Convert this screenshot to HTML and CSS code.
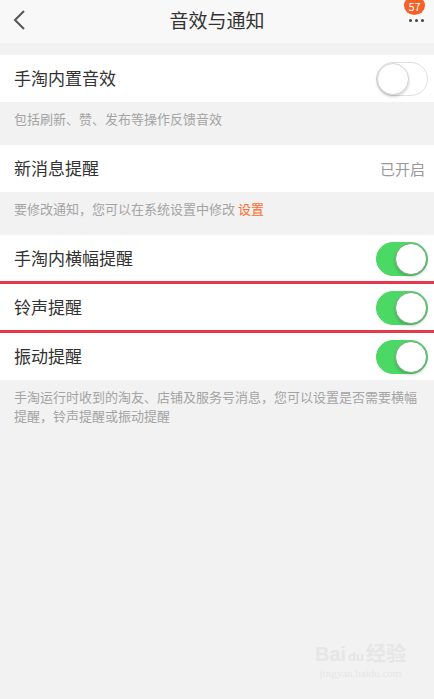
FILE: index.html
```html
<!DOCTYPE html>
<html lang="zh-CN">

<head>
  <meta charset="UTF-8" />
  <meta name="viewport" content="width=device-width, initial-scale=1" />
  <title>音效与通知</title>
  <link rel="stylesheet" href="styles.css">
</head>

<body>

  <header class="topbar">
    <svg class="back" width="14" height="22" viewBox="0 0 14 22">
      <path d="M12 2 L3 11 L12 20" fill="none" stroke="#555" stroke-width="2" />
    </svg>
    <div class="title">音效与通知</div>
    <div class="more">
      <span class="badge">57</span>
      <span class="dots"><i></i><i></i><i></i></span>
    </div>
  </header>

  <div class="group">
    <div class="row">
      <span>手淘内置音效</span>
      <span class="switch"></span>
    </div>
  </div>
  <div class="desc">包括刷新、赞、发布等操作反馈音效</div>

  <div class="group">
    <div class="row">
      <span>新消息提醒</span>
      <span class="value">已开启</span>
    </div>
  </div>
  <div class="desc">要修改通知，您可以在系统设置中修改 <span class="link">设置</span></div>

  <div class="group">
    <div class="row">
      <span>手淘内横幅提醒</span>
      <span class="switch on"></span>
    </div>
    <div class="mark"></div>
    <div class="row">
      <span>铃声提醒</span>
      <span class="switch on"></span>
    </div>
    <div class="mark"></div>
    <div class="row">
      <span>振动提醒</span>
      <span class="switch on"></span>
    </div>
  </div>
  <div class="desc">手淘运行时收到的淘友、店铺及服务号消息，您可以设置是否需要横幅提醒，铃声提醒或振动提醒</div>

  <div class="watermark">
    <div class="wm-logo">Bai<span class="paw">du</span>经验</div>
    <div class="wm-url">jingyan.baidu.com</div>
  </div>

</body>

</html>
```

FILE: styles.css
```css
html,
body {
  margin: 0;
  padding: 0;
  width: 100%;
  height: 100%;
}

body {
  font-family: "Noto Sans CJK SC", "Noto Sans", sans-serif;
  background: #f2f2f2;
  color: #333;
  overflow: hidden;
  position: relative;
}

.topbar {
  height: 43px;
  background: #f8f8f8;
  display: flex;
  align-items: center;
  justify-content: center;
  position: relative;
  margin-bottom: 12px;
}

.back {
  position: absolute;
  left: 12px;
  top: 9px;
}

.title {
  font-size: 19px;
  color: #333;
  margin-top: -4px;
}

.more {
  position: absolute;
  right: 9px;
  top: 0;
  width: 22px;
  height: 30px;
}

.badge {
  position: absolute;
  top: -4px;
  right: 0;
  width: 21px;
  height: 19px;
  border-radius: 50%;
  background: #f4622a;
  color: #fff;
  font-size: 11px;
  line-height: 21px;
  text-align: center;
}

.dots {
  position: absolute;
  top: 19px;
  right: 1px;
  display: flex;
  gap: 3px;
}

.dots i {
  width: 3px;
  height: 3px;
  border-radius: 50%;
  background: #444;
}

.group {
  background: #fff;
}

.row {
  height: 47px;
  padding: 0 6px 0 14px;
  display: flex;
  align-items: center;
  justify-content: space-between;
  font-size: 17px;
  color: #333;
}

.row > span:first-child {
  margin-top: -3px;
}

.value {
  font-size: 15px;
  color: #999;
  margin-right: 3px;
}

.mark {
  height: 3px;
  background: #e8364a;
  margin-top: -1px;
  position: relative;
}

.desc {
  padding: 7px 14px 17px;
  font-size: 13px;
  line-height: 19px;
  color: #a4a4a4;
}

.link {
  color: #ff6a2b;
}

.switch {
  width: 50px;
  height: 32px;
  border-radius: 17px;
  border: 1px solid #e0e0e0;
  background: #fff;
  position: relative;
}

.switch::after {
  content: "";
  position: absolute;
  left: 0;
  top: 0;
  width: 30px;
  height: 30px;
  border-radius: 50%;
  background: #fff;
  border: 1px solid #d5d5d5;
  box-shadow: 0 2px 3px rgba(0, 0, 0, 0.18);
}

.switch.on {
  background: #4cd864;
  border-color: #4cd864;
}

.switch.on::after {
  left: auto;
  right: 0;
  border-color: #79a57f;
}

.watermark {
  position: absolute;
  right: 28px;
  bottom: 20px;
  text-align: center;
  color: #e6e6e6;
}

.wm-logo {
  font-family: "Liberation Sans", "Noto Sans CJK SC", sans-serif;
  font-size: 20px;
  font-weight: bold;
}

.paw {
  font-size: 13px;
  margin: 0 2px;
}

.wm-url {
  font-family: "Liberation Serif", serif;
  font-size: 11px;
}
```
